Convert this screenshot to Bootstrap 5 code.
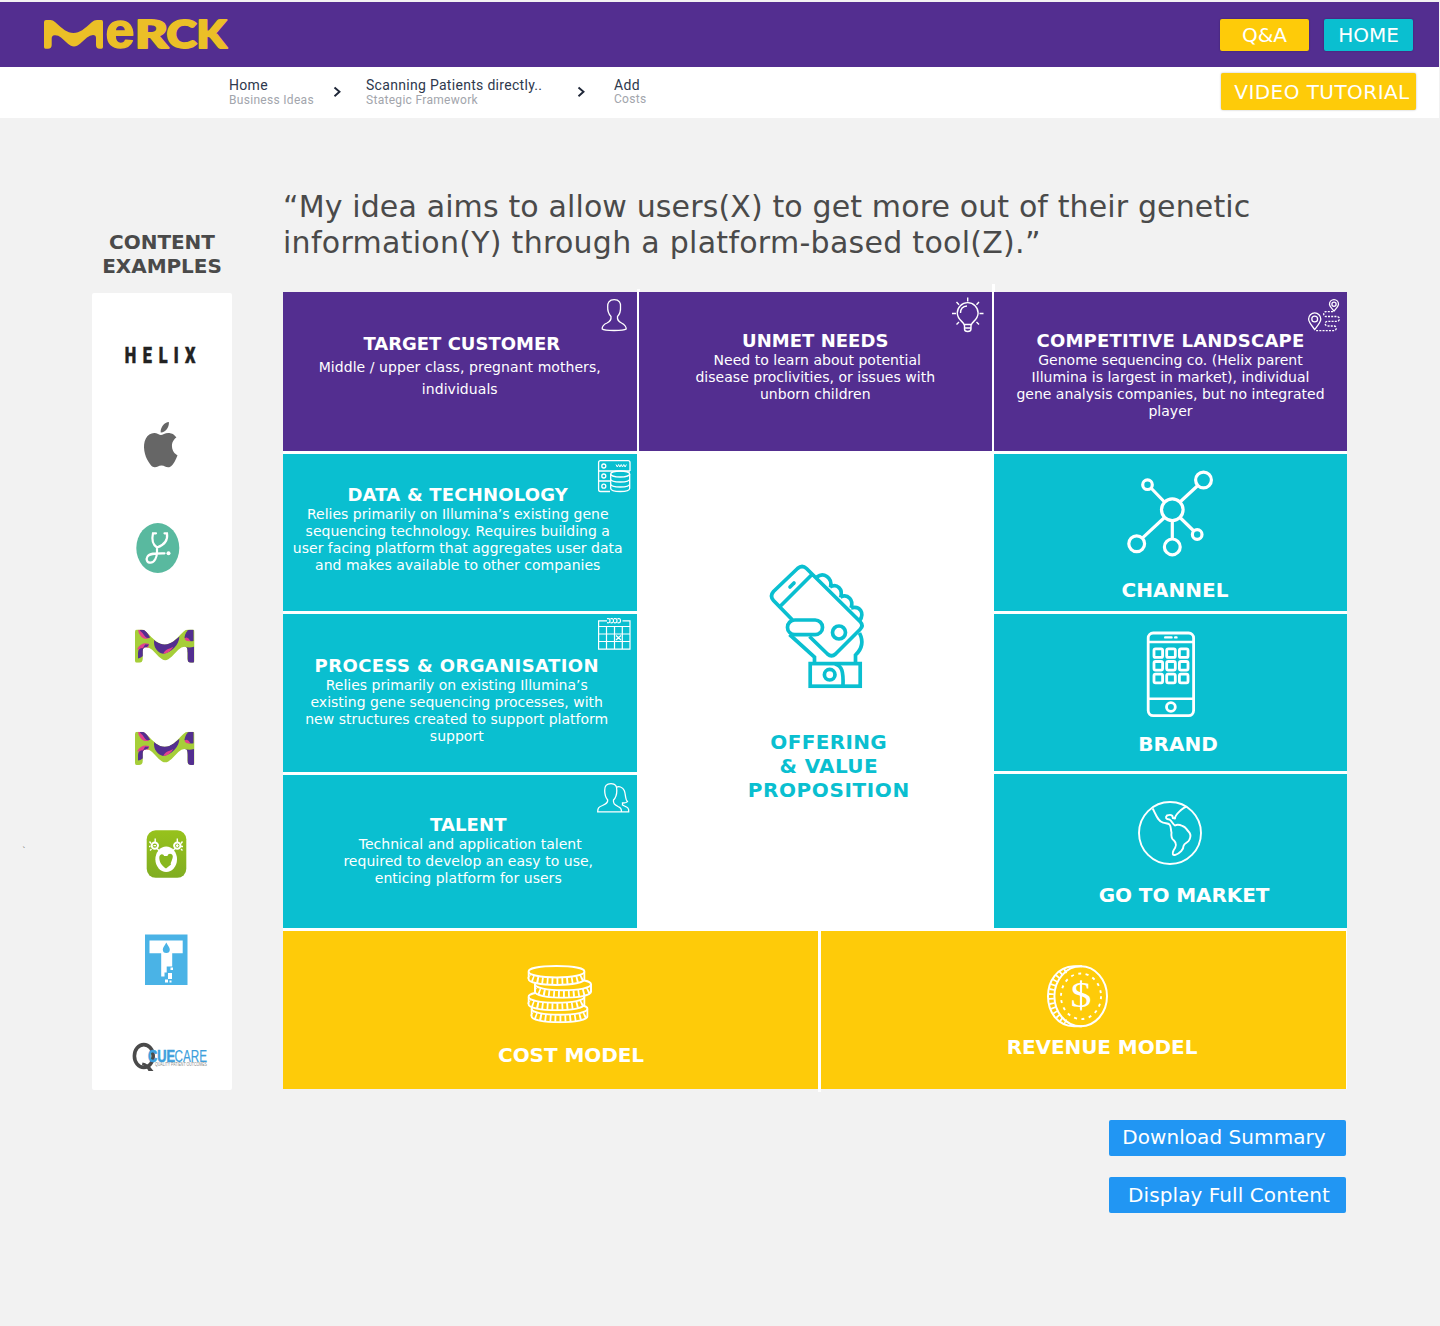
<!DOCTYPE html>
<html lang="en">
<head>
<meta charset="utf-8">
<meta name="viewport" content="width=device-width, initial-scale=1">
<title>Merck – Business Ideas</title>
<link rel="stylesheet" href="https://cdn.jsdelivr.net/npm/bootstrap@5.3.0/dist/css/bootstrap.min.css">
<script src="https://cdn.jsdelivr.net/npm/bootstrap@5.3.0/dist/js/bootstrap.bundle.min.js"></script>
<style>
:root{--violet:#532e90;--teal:#0abfd0;--sun:#fecb09;--sky:#2196f3}
body{background:#f2f2f2;font-family:"DejaVu Sans",Verdana,sans-serif;width:1440px;min-height:1326px;overflow-x:hidden}
svg{display:block;flex:none}
.topbar{height:65px;margin:2px 1px 0 0;background:var(--violet);padding:0 26px 0 0}
.topbar .actions{gap:15px;padding-top:17px}
.subbar{height:51px;margin-right:1px;background:#fff;padding:0 23px 0 229px}
.act{border:0;border-radius:2px;color:#fff;font-size:20px;line-height:24px;padding:0;height:32px;white-space:nowrap;box-shadow:0 0 2px rgba(0,0,0,.3)}
.act:hover{color:#fff}
.act-sun{background:var(--sun)}.act-teal{background:var(--teal)}.act-sky{background:var(--sky);box-shadow:none;height:36px;width:237px}
.act-short{width:89px}.act-video{width:195px;height:37px;margin-top:6px;padding-left:7px;line-height:22px;letter-spacing:.45px}
.crumb{font-family:Roboto,sans-serif;color:#2e384d;font-size:14px;line-height:16px;letter-spacing:.3px;padding-top:10px;white-space:nowrap}
.crumb span{display:block;color:#a2a5ac;font-size:12px;line-height:14.5px}
.crumb-a{width:104px}.crumb-b{width:211px}
.side{width:140px;margin-left:92px;padding-top:112px}
.side-title{font-size:20px;line-height:24px;font-weight:700;color:#4a4a4a;letter-spacing:-.05px;margin:0 -10px 14.5px}
.logos{background:#fff;border-radius:2px;height:797.5px}
.main-col{width:1064px;margin-left:51px;padding-top:70.5px}
.quote{font-size:30px;line-height:36px;color:#4a4a4a;letter-spacing:.13px;height:103.5px;margin:0;white-space:nowrap}
.quote span{letter-spacing:.28px}
.board{background:#fff;width:1064px;height:797px}
.tick{position:absolute;width:3px;background:#fff}
.tile{position:relative;color:#fff;text-align:center;white-space:nowrap}
.tile svg.corner{position:absolute;top:0;right:0}
.violet{background:var(--violet);height:159px}.teal{background:var(--teal)}.sun{background:var(--sun);height:158px}
.tile h3{font-size:18px;line-height:20px;font-weight:700;margin:0;letter-spacing:.12px}
.tile p{font-size:14px;line-height:17px;margin:1px 0 0;letter-spacing:.03px}
.tile p.airy{line-height:22px;margin-top:2px;letter-spacing:.06px}
.tile h2,.offer h2{font-size:20px;line-height:24px;font-weight:700;margin:0}
.colw{width:353.5px}
.offer{width:355px;color:var(--teal);text-align:center}
.ln{fill:none;stroke:currentColor}
.arrow{color:#1f2738}
.speck{position:absolute;left:22px;top:845px;font-size:9px;color:#777;line-height:12px}
</style>
</head>
<body>
<svg width="0" height="0" class="position-absolute">
  <defs>
    <path id="mshape" d="M44 22Q44 20 46 20H50.500Q53 20 55 22C63 29 67 33 73.500 33S84 29 92 22Q94 20 97 20H101.500Q103 20 103 22V47Q103 48.700 101.500 48.700H99.500Q96 48.700 96 45V38Q96 35 93 35Q90 35 87 37.500C82.500 41.500 78 46.500 74 46.500S65.500 41.500 61 37.500Q58 35 54.500 35.300Q51.700 35.500 51.700 38.500V45Q51.700 48.700 48 48.700H45.500Q44 48.700 44 47Z"/>
    <clipPath id="mclip"><use href="#mshape"/></clipPath>
    <symbol id="molecule" viewBox="44 20 59 28.700" preserveAspectRatio="none">
      <use href="#mshape" fill="#a6ce39"/>
      <g clip-path="url(#mclip)">
        <path d="M47 20H52C55 21 58 25 58.500 27C56 29 52 28 50 26Q47 23 47 20Z" fill="#e2418d"/>
        <path d="M49 20H54L59 27Q56 28 54 26Q52 23 49 21Z" fill="#532e90"/>
        <path d="M46 37C49 32 54 31 58 32.500L57 36L52 38Z" fill="#e2418d"/>
        <path d="M47 45V40Q47 36 52 36L54 33L58 33L55 36L52 37V43Q49 45 47 45Z" fill="#532e90"/>
        <path d="M63 29C70 34 78 34 88 26C88 33 80 40 72 41C66 40 62 35 63 29Z" fill="#532e90"/>
        <path d="M72 41C74 37 78 37 82 35Q78 41 72 41Z" fill="#e2418d"/>
        <path d="M93 27C94 22 97 19 102 19V30Q96 31 93 27Z" fill="#532e90"/>
        <path d="M93 28Q96 25 99 30Q95 31 93 28Z" fill="#e2418d"/>
        <path d="M93 35Q98 36 102.500 35V49H96V40Q96 37 93 35Z" fill="#532e90"/>
      </g>
    </symbol>
    <symbol id="coin" viewBox="0 0 58 21">
      <path d="M1 6.500C1 3 13 1 29 1S57 3 57 6.500V14C57 17.500 45 20 29 20S1 17.500 1 14Z" fill="#fecb09" stroke="#fff" stroke-width="2"/>
      <path d="M1.500 11C4 14.500 16 16.300 29 16.300S54 14.500 56.500 11" fill="none" stroke="#fff" stroke-width="6.500" stroke-dasharray="1.800 3.100" stroke-dashoffset="-4"/>
      <path d="M1 6.500C1 10 13 12.500 29 12.500S57 10 57 6.500" fill="none" stroke="#fff" stroke-width="2"/>
    </symbol>
  </defs>
</svg>

<header class="topbar d-flex justify-content-between align-items-start">
  <svg width="240" height="65" viewBox="0 2 240 65" fill="#ebbf27" stroke="#ebbf27" stroke-linejoin="round" role="img" aria-label="Merck">
    <use href="#mshape" stroke="none"/>
    <g font-weight="900" stroke-width="2">
      <text x="105.500" y="47.600" font-family="Liberation Sans,sans-serif" font-weight="700" font-size="50" stroke-width="1.500" textLength="29" lengthAdjust="spacingAndGlyphs">e</text>
      <g font-family="Lato,sans-serif" font-size="37.500">
        <text x="135" y="47.600" textLength="33" lengthAdjust="spacingAndGlyphs">R</text>
        <text x="166.500" y="47.600" textLength="30" lengthAdjust="spacingAndGlyphs">C</text>
        <text x="196.500" y="47.600" textLength="30" lengthAdjust="spacingAndGlyphs">K</text>
      </g>
    </g>
  </svg>
  <div class="d-flex actions">
    <a href="#" class="btn act act-sun act-short pt-1">Q&amp;A</a>
    <a href="#" class="btn act act-teal act-short pt-1">HOME</a>
  </div>
</header>

<nav class="subbar d-flex justify-content-between align-items-start">
  <div class="d-flex">
    <div class="crumb crumb-a">Home<span>Business Ideas</span></div>
    <svg width="33" height="51" viewBox="333 67 33 51" class="ln arrow"><path d="M334.500 87.500L339.500 91.800L334.500 96.200" stroke-width="1.900"/></svg>
    <div class="crumb crumb-b">Scanning Patients directly..<span>Stategic Framework</span></div>
    <svg width="37" height="51" viewBox="577 67 37 51" class="ln arrow"><path d="M578.500 87.500L583.500 91.800L578.500 96.200" stroke-width="1.900"/></svg>
    <div class="crumb">Add<span class="lh-1">Costs</span></div>
  </div>
  <a href="#" class="btn act act-sun act-video pt-2">VIDEO TUTORIAL</a>
</nav>

<main class="d-flex align-items-start">
  <aside class="side">
    <div class="side-title text-center">CONTENT<br>EXAMPLES</div>
    <div class="logos d-flex flex-column">
      <svg width="140" height="107.500" viewBox="92 292.500 140 107.500" fill="#222" stroke="#222" stroke-width=".5">
        <g transform="scale(.74 1)" font-family="Roboto,sans-serif" font-weight="900" font-size="22"><text y="362.500" x="168.500 193 214.500 234.700 250">HELIX</text></g>
      </svg>
      <svg width="140" height="97" viewBox="92 400 140 97" fill="#666">
        <path transform="translate(140.200 422) scale(1.710 1.890)" d="M12.152 6.896c-.948 0-2.415-1.078-3.960-1.040-2.040.027-3.910 1.183-4.961 3.014-2.117 3.675-.546 9.103 1.519 12.090 1.013 1.454 2.208 3.090 3.792 3.039 1.520-.065 2.090-.987 3.935-.987 1.831 0 2.350.987 3.960.948 1.637-.026 2.676-1.480 3.676-2.948 1.156-1.688 1.636-3.325 1.662-3.415-.039-.013-3.182-1.221-3.220-4.857-.026-3.040 2.480-4.494 2.597-4.559-1.429-2.090-3.623-2.324-4.390-2.376-2-.156-3.675 1.090-4.610 1.090zM15.530 3.830c.843-1.012 1.400-2.427 1.245-3.830-1.207.052-2.662.805-3.532 1.818-.780.896-1.454 2.338-1.273 3.714 1.338.104 2.715-.688 3.559-1.701"/>
      </svg>
      <svg width="140" height="100" viewBox="92 497 140 100">
        <ellipse cx="157.800" cy="548" rx="21.500" ry="25" fill="#59b99f"/>
        <path d="M156 533.300H153C151.500 540 153 545 157 547.500C164 545 168 540 167 533.300H164.500M157 547.500V552C157 557 154.500 562.700 150.500 562.700S146 559 147.500 556.500C149.500 553 156 553.300 164.500 553.300" fill="none" stroke="#fff" stroke-width="2.200" stroke-linecap="round"/>
        <circle cx="168.500" cy="553.300" r="2" fill="#fff"/>
      </svg>
      <svg width="140" height="100" viewBox="92 597 140 100"><use href="#molecule" x="135" y="629.500" width="59.500" height="33.200"/></svg>
      <svg width="140" height="102" viewBox="92 697 140 102"><use href="#molecule" x="135" y="731.700" width="59.500" height="33.200"/></svg>
      <svg width="140" height="108" viewBox="92 799 140 108">
        <linearGradient id="leaf" x2="0" y2="1"><stop stop-color="#97c21c"/><stop offset="1" stop-color="#80ad22"/></linearGradient>
        <rect x="146.700" y="830.300" width="39.600" height="47.500" rx="9" fill="url(#leaf)"/>
        <ellipse cx="166.200" cy="859.300" rx="10.800" ry="12.700" fill="#fff"/>
        <path d="M159.300 857C160 853 164 854 164 856H167.500C168 853 172 853 172.800 856C172.800 860 170 863 171 864.500L166 868.500C162 866 159 862 159.300 857Z" fill="#88b81f"/>
        <g fill="none" stroke="#fff" stroke-width="2">
          <circle cx="154.800" cy="845.600" r="3.200"/><circle cx="177.300" cy="845.600" r="3.200"/>
          <path d="M153.500 845.600H156M176 845.600H178.600M177.300 844.300V847M155.200 842V838.500M151 843.500L149.500 841.500M150.500 846.500H149M151.500 849L150 850.500M177.300 842V838.500M181 843.500L182.500 841.500M181 846.500H183M181 849L182.500 850.500M157 848.500L159.500 851M175 848.500L172.500 851" stroke-width="1.400"/>
        </g>
      </svg>
      <svg width="140" height="103" viewBox="92 907 140 103">
        <rect x="145" y="934.500" width="42.500" height="50.500" fill="#4ab3e6"/>
        <path d="M149.500 940.500H182.700V953.300H172.200V966.500H166.700V972.500H164.500V976.500H161.200V953.300H149.500Z" fill="#fff"/>
        <path d="M166.300 942.500C168 946 169.800 947.500 169.800 949.500A3.500 3.500 0 0 1 162.800 949.500C162.800 947.500 164.600 946 166.300 942.500Z" fill="#4ab3e6"/>
        <path d="M168 973H172V979H168ZM170.500 967.500H173V970H170.500ZM165 979.500H168V982.500H165ZM169.500 980.500H171.500V982.500H169.500Z" fill="#fff"/>
      </svg>
      <svg width="140" height="80" viewBox="92 1010 140 80">
        <ellipse cx="143.800" cy="1056" rx="9.400" ry="11.400" fill="none" stroke="#4a4a4a" stroke-width="3.600"/>
        <path d="M142.500 1062.500Q148 1063 153.500 1071H148.500Q146 1066 142 1065Z" fill="#4a4a4a"/>
        <g font-family="Liberation Sans,sans-serif" font-size="16.500" fill="#3d9fdc">
          <text x="148" y="1061.500" font-weight="700" textLength="27" lengthAdjust="spacingAndGlyphs" stroke="#3d9fdc" stroke-width=".6">CUE</text>
          <text x="174.500" y="1061.500" textLength="32.500" lengthAdjust="spacingAndGlyphs" stroke="#3d9fdc" stroke-width=".2">CARE</text>
          <text x="155" y="1066" font-size="4.500" fill="#888" textLength="52" lengthAdjust="spacingAndGlyphs">QUALITY PATIENT OUTCOMES</text>
        </g>
      </svg>
    </div>
  </aside>

  <section class="main-col">
    <p class="quote">“My idea aims to allow users(X) to get more out of their genetic<br><span>information(Y) through a platform-based tool(Z).”</span></p>

    <div class="board position-relative">
      <i class="tick" style="left:353.500px;top:-3px;height:10px"></i>
      <i class="tick" style="left:708.500px;top:-8px;height:10px"></i>
      <i class="tick" style="left:535px;top:796px;height:4px"></i>

      <div class="d-flex justify-content-between">
        <div class="tile violet colw" style="padding-top:42px">
          <svg class="corner" width="63" height="50" viewBox="573.500 292 63 50"><path class="ln" stroke-width="1.300" d="M613.700 299.700C608.500 299.700 607 303 607.200 306.500C607 311 608.500 314.500 610.500 316.500C611 320 609.500 321.500 606.500 323C602 325 601.500 327 601.700 329C604 331 623 331 625.700 329C625.700 327 625 325 621 323C618 321.500 616.500 320 617 316.500C619 314.500 620.300 311 620 306.500C620.300 303 619 299.700 613.700 299.700Z"/></svg>
          <h3 class="ps-1" style="letter-spacing:0">TARGET CUSTOMER</h3>
          <p class="airy">Middle / upper class, pregnant mothers,<br>individuals</p>
        </div>
        <div class="tile violet" style="width:352.500px;padding-top:39px">
          <svg class="corner" width="63" height="50" viewBox="929 292 63 50"><path class="ln" stroke-width="1.400" d="M964 324.500C964 322 957.300 320 957.300 313A10.400 10.400 0 0 1 978.100 313C978.100 320 971.500 322 971.500 324.500ZM964.500 325V329Q964.500 331.500 967.700 331.500T971 329V325M964.500 328H971M960.500 313Q960.500 306.500 967 306M967.700 297.500V301.500M952 313.500H956M979.500 313.500H983.500M956.500 302L959 304.700M979 302L976.500 304.700M956.500 324.500L959 322M979 324.500L976.500 322"/></svg>
          <h3 style="letter-spacing:.03px">UNMET NEEDS</h3>
          <p><span class="ps-1">Need to learn about potential</span><br>disease proclivities, or issues with<br>unborn children</p>
        </div>
        <div class="tile violet" style="width:353px;padding-top:39px">
          <svg class="corner" width="63" height="50" viewBox="1284 292 63 50"><g class="ln" stroke-width="1.300"><path d="M1314.700 329.500C1310.500 324 1308.600 322 1308.600 319A6.100 6.100 0 0 1 1320.800 319C1320.800 322 1319 324 1314.700 329.500ZM1334 311C1331 307.500 1329.500 306 1329.500 304.200A4.500 4.500 0 0 1 1338.500 304.200C1338.500 306 1337 307.500 1334 311Z"/><circle cx="1314.700" cy="319" r="2.900"/><circle cx="1334" cy="304.300" r="2.100"/><path stroke-dasharray="2 1.200" d="M1333 311.700H1325.500A2.500 2.500 0 0 0 1325.500 316.500H1337A2.300 2.300 0 0 1 1337 321.300H1327.500A2.300 2.300 0 0 0 1327.500 326H1334A2.300 2.300 0 0 1 1334 330.600H1316"/></g></svg>
          <h3 style="letter-spacing:.22px">COMPETITIVE LANDSCAPE</h3>
          <p style="letter-spacing:0">Genome sequencing co. (Helix parent<br>Illumina is largest in market), individual<br>gene analysis companies, but no integrated<br>player</p>
        </div>
      </div>

      <div class="d-flex justify-content-between" style="padding:3px 0">
        <div class="d-flex flex-column colw" style="gap:3px">
          <div class="tile teal" style="height:157px;padding:31px 4px 0 0">
            <svg class="corner" width="63" height="50" viewBox="574 454 63 50"><g class="ln" stroke-width="1.300"><path d="M610 491.500H600.500Q598.600 491.500 598.600 489.500V462.500Q598.600 460.600 600.500 460.600H628Q630 460.600 630 462.500V471M598.600 471H630M598.600 481H610.500"/><circle cx="603.800" cy="466" r="2"/><circle cx="603.800" cy="476" r="2"/><circle cx="603.800" cy="486.200" r="2"/><ellipse cx="620.200" cy="474" rx="9.500" ry="3"/><path d="M610.700 474V488.500C611 492.500 629.500 492.500 629.700 488.500V474M610.700 479C611 483 629.500 483 629.700 479M610.700 484C611 488 629.500 488 629.700 484"/><path stroke-width="1" d="M616 464.500l1.300 2.500 1.300-2.500 1.300 2.500 1.300-2.500 1.300 2.500 1.300-2.500 1.300 2.500 1.300-2.500"/></g></svg>
            <h3 style="letter-spacing:.2px">DATA &amp; TECHNOLOGY</h3>
            <p style="letter-spacing:.01px">Relies primarily on Illumina’s existing gene<br>sequencing technology. Requires building a<br>user facing platform that aggregates user data<br>and makes available to other companies</p>
          </div>
          <div class="tile teal" style="height:158px;padding:42px 6px 0 0">
            <svg class="corner" width="63" height="50" viewBox="574 614 63 50"><g class="ln" stroke-width="1.200"><path d="M607 620.800H598.600V649.200H630V620.800H622.500M598.600 626.500H630M598.600 634H630M598.600 641.500H630M606.500 626.500V649M614.500 626.500V649M622.300 626.500V649"/><path d="M607 618.700q3-.7 3 2t-3 2M610.500 618.700q3-.7 3 2t-3 2M614 618.700q3-.7 3 2t-3 2M617.500 618.700q3-.7 3 2t-3 2M607.500 619M616 635.500L621 640M621 635.500L616 640"/></g></svg>
            <h3 style="letter-spacing:.39px">PROCESS &amp; ORGANISATION</h3>
            <p style="letter-spacing:.01px">Relies primarily on existing Illumina’s<br>existing gene sequencing processes, with<br>new structures created to support platform<br>support</p>
          </div>
          <div class="tile teal" style="height:153px;padding:40px 0 0 17px">
            <svg class="corner" width="63" height="50" viewBox="574 775 63 50"><path class="ln" stroke-width="1.300" d="M621.500 811.800H597.700C597.700 808 598.500 807 602.500 805.500C606 804 608 803 607.700 800C606 798 604.700 794.500 604.700 790.500C604.500 786 606.500 783.600 611 783.600S617 786 616.800 790.500C616.800 794.500 615.500 798 613.500 800C613 803.500 614.500 804.500 618 806.500C620.500 807.800 621.500 808.500 621.500 811.800H628.700C629 808 628 807.500 622.500 805V803Q626.500 803 627.500 801.500Q626 800 625.700 797.500C625 793 625 788.500 620.500 787Q618.500 786.300 616.500 787.200"/></svg>
            <h3>TALENT</h3>
            <p><span class="ps-1">Technical and application talent</span><br>required to develop an easy to use,<br>enticing platform for users</p>
          </div>
        </div>

        <div class="offer">
          <svg width="355" height="276" viewBox="637 454 355 276"><g class="ln" stroke-width="3.700">
            <path d="M791.500 620L772.500 600.500Q768.500 596 772.500 591.500L796.500 568.500Q801.200 564.500 805.500 568.500L859 621.500Q863 625.500 859 629.500L834.500 654Q830.500 657.500 826.500 654L808.500 636.500M811 574.500L779.500 606"/>
            <path d="M789 587L793 583" stroke-linecap="round"/>
            <rect x="786.500" y="620" width="35" height="14.700" rx="7.300"/>
            <circle cx="838" cy="632.500" r="6.500"/>
            <path d="M816 577C822 572 832 577 829.500 587.500M829 587C836 583 842.500 589 839.500 597.500M839.500 597C847 593.500 853 600 850 608M850 608C859 605.500 864 613 858.500 621"/>
            <path d="M788.500 634.500L813.500 657V662M858.500 633C862.500 641 862 648 854.500 655V662"/>
            <rect x="809.200" y="663.600" width="50" height="22.600"/><circle cx="828.700" cy="674.700" r="5.300"/><path d="M834 664C841 666 842.500 671 842 686"/>
          </g></svg>
          <h2 style="padding-left:27px;letter-spacing:.35px">OFFERING<br>&amp; VALUE<br><span style="letter-spacing:.62px">PROPOSITION</span></h2>
        </div>

        <div class="d-flex flex-column" style="gap:3px;width:353px">
          <div class="tile teal" style="height:157px">
            <svg width="353" height="124" viewBox="994 454 353 124"><g class="ln" stroke-width="3.200"><circle cx="1172.300" cy="509.700" r="10.800"/><circle cx="1203.500" cy="480" r="7.900"/><circle cx="1147.500" cy="484.700" r="4.800"/><circle cx="1136.700" cy="543.700" r="7.900"/><circle cx="1172.300" cy="546.900" r="7.900"/><circle cx="1197.200" cy="534.500" r="4.800"/><path d="M1180 502L1197.800 485.500M1164.500 502L1151 488M1164.500 517.500L1142.300 538.200M1172.300 520.500V539M1180 517.500L1193.800 531"/></g></svg>
            <h2 style="padding-left:9px">CHANNEL</h2>
          </div>
          <div class="tile teal" style="height:157px">
            <svg width="353" height="118" viewBox="994 614 353 118"><g class="ln" stroke-width="2.800"><rect x="1148.200" y="633" width="45.400" height="82.600" rx="5"/><path d="M1148 642H1193.500M1148 698.700H1193.500" stroke-width="2.500"/><path d="M1165.200 637.400H1171.500M1175.200 637.400H1176.500" stroke-width="2.400" stroke-linecap="round"/><circle cx="1170.900" cy="707" r="4.400"/>
            <rect x="1154" y="648.800" width="8.600" height="8.600" rx="1.500"/><rect x="1166.700" y="648.800" width="8.600" height="8.600" rx="1.500"/><rect x="1179.400" y="648.800" width="8.600" height="8.600" rx="1.500"/><rect x="1154" y="661.500" width="8.600" height="8.600" rx="1.500"/><rect x="1166.700" y="661.500" width="8.600" height="8.600" rx="1.500"/><rect x="1179.400" y="661.500" width="8.600" height="8.600" rx="1.500"/><rect x="1154" y="674.200" width="8.600" height="8.600" rx="1.500"/><rect x="1166.700" y="674.200" width="8.600" height="8.600" rx="1.500"/><rect x="1179.400" y="674.200" width="8.600" height="8.600" rx="1.500"/></g></svg>
            <h2 style="padding-left:15px">BRAND</h2>
          </div>
          <div class="tile teal" style="height:154px">
            <svg width="353" height="109" viewBox="994 774 353 109"><g class="ln" stroke-width="1.900" stroke-linejoin="round"><circle cx="1170" cy="833" r="31"/><path d="M1152.700 808.500C1156 815 1158 821.500 1163 822.700C1166 823.500 1168 823 1169.500 824.500C1171.500 827 1170.500 829.500 1171.500 832.500C1171 836 1171 838.500 1174 840.500C1177.500 844 1176 847 1173.500 850.500C1172 853.500 1172.500 855.500 1175.500 854.800C1180 853.500 1183.500 849.500 1183.500 846C1184.500 842.500 1188 843 1189.500 839.500C1191.500 835.500 1190.500 833.500 1188.500 831.500C1186 829 1186 827 1182.500 826C1179.500 824.500 1176.500 824.500 1175 825.500C1172.500 824 1172 821 1169.500 819.500C1166 819.500 1165 817.500 1167 815.500C1170 814.500 1173 814.500 1172.800 818L1175 818.500C1175 815 1179 812 1181 810Q1184 807.500 1186.500 806.700"/></g></svg>
            <h2 style="padding-left:27px;letter-spacing:-.08px">GO TO MARKET</h2>
          </div>
        </div>
      </div>

      <div class="d-flex" style="gap:3px;width:1063px">
        <div class="tile sun" style="width:535px">
          <svg width="535" height="112" viewBox="283 931 535 112"><use href="#coin" x="530.500" y="1002.300" width="58" height="21"/><use href="#coin" x="527.500" y="990.300" width="58" height="21"/><use href="#coin" x="534" y="977.800" width="58" height="21"/><use href="#coin" x="527.500" y="965" width="58" height="21"/></svg>
          <h2 style="padding-left:41px;letter-spacing:-.08px">COST MODEL</h2>
        </div>
        <div class="tile sun" style="width:525px">
          <svg width="525" height="104" viewBox="821 931 525 104"><g class="ln" stroke-width="2"><ellipse cx="1080.700" cy="996.300" rx="26.300" ry="30"/><path d="M1082 966.300H1074C1057 967 1048 981 1048 996.300S1057 1025.600 1074 1026.300H1082"/><path d="M1066 970.500C1055 976 1051.300 987 1051.300 996.300S1055 1016.500 1066 1022" stroke-width="5" stroke-dasharray="1.700 3"/><ellipse cx="1081" cy="996.300" rx="20" ry="22.800" stroke-width="1.900" stroke-dasharray="3 4.500"/><path d="M1081 980.500V1010.500" stroke-width="1.600"/></g><text x="1081" y="1007" text-anchor="middle" font-family="Liberation Serif,serif" font-size="35" fill="#fff" textLength="21" lengthAdjust="spacingAndGlyphs">$</text></svg>
          <h2 style="padding-left:37px;letter-spacing:-.08px">REVENUE MODEL</h2>
        </div>
      </div>
    </div>

    <div class="d-flex flex-column align-items-end" style="gap:21px;padding:31px 1px 0 0">
      <a href="#" class="btn act act-sky" style="padding:5px 7px 0 0;letter-spacing:.06px">Download Summary</a>
      <a href="#" class="btn act act-sky" style="padding:6px 0 0 3px;letter-spacing:.08px">Display Full Content</a>
    </div>
  </section>
</main>
<span class="speck">`</span>
</body>
</html>
